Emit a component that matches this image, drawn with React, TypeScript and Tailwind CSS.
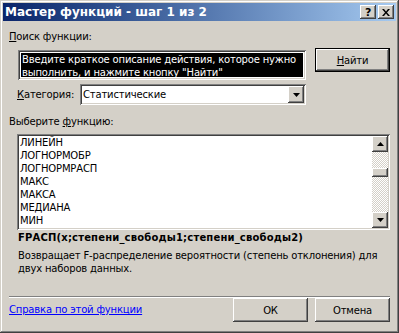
const raised =
  'shadow-[inset_-1px_-1px_#404040,inset_1px_1px_#fff,inset_-2px_-2px_#808080,inset_2px_2px_#d4d0c8]';
const sunken =
  'shadow-[inset_1px_1px_#808080,inset_-1px_-1px_#fff,inset_2px_2px_#404040,inset_-2px_-2px_#d4d0c8]';

const functions = ['ЛИНЕЙН', 'ЛОГНОРМОБР', 'ЛОГНОРМРАСП', 'МАКС', 'МАКСА', 'МЕДИАНА', 'МИН'];

function Arrow({ up = false }: { up?: boolean }) {
  return (
    <svg width="7" height="4" viewBox="0 0 7 4" className={up ? 'rotate-180' : ''}>
      <path d="M0 0h7L3.5 4z" fill="#000" />
    </svg>
  );
}

function TitleBar() {
  return (
    <div className="h-[18px] flex items-center pl-[2px] pr-[2px] bg-linear-to-r from-[#0a246a] to-[#a6caf0]">
      <span className="text-white font-bold text-[12px] leading-[18px] tracking-normal">
        Мастер функций - шаг 1 из 2
      </span>
      <div className="ml-auto flex gap-[2px]">
        <div className={`w-[16px] h-[14px] bg-[#d4d0c8] flex items-center justify-center ${raised}`}>
          <span className="font-bold text-[11px] leading-none">?</span>
        </div>
        <div className={`w-[16px] h-[14px] bg-[#d4d0c8] flex items-center justify-center ${raised}`}>
          <svg width="8" height="7" viewBox="0 0 8 7">
            <path d="M0 0h2l2 2.5L6 0h2L5 3.5 8 7H6L4 4.5 2 7H0l3-3.5z" fill="#000" />
          </svg>
        </div>
      </div>
    </div>
  );
}

function Button({ label, def = false, u }: { label: string; def?: boolean; u?: number }) {
  const text =
    u === undefined ? (
      label
    ) : (
      <>
        {label.slice(0, u)}
        <span className="underline">{label[u]}</span>
        {label.slice(u + 1)}
      </>
    );
  return (
    <div
      className={`w-[75px] h-[24px] bg-[#d4d0c8] flex items-center justify-center ${
        def ? 'border border-black' : ''
      } ${raised}`}
    >
      <span className="leading-[13px]">{text}</span>
    </div>
  );
}

export default function App() {
  return (
    <div className="w-[399px] h-[333px] bg-[#d4d0c8] p-[3px] flex flex-col font-['DejaVu_Sans',sans-serif] text-[10px] tracking-[-0.17px] text-black shadow-[inset_-1px_-1px_#404040,inset_1px_1px_#d4d0c8,inset_-2px_-2px_#808080,inset_2px_2px_#fff]">
      <TitleBar />
      <div className="flex flex-col px-[6px]">
        <div className="mt-[9px] h-[13px] leading-[13px]">
          <span className="underline">П</span>оиск функции:
        </div>

        <div className="mt-[5px] flex items-start">
          <div className={`ml-[9px] mt-[2px] w-[288px] h-[30px] p-[2px] bg-white ${sunken}`}>
            <div className="h-full p-px bg-white">
              <div className="h-full bg-black text-white leading-[13px] pl-px overflow-hidden whitespace-nowrap">
                Введите краткое описание действия, которое нужно
                <br />
                выполнить, и нажмите кнопку "Найти"
              </div>
            </div>
          </div>
          <div className="ml-[9px]">
            <Button label="Найти" def u={0} />
          </div>
        </div>

        <div className="mt-[4px] flex items-center">
          <div className="ml-[8px] w-[63px] whitespace-nowrap">
            <span className="underline">К</span>атегория:
          </div>
          <div className={`w-[226px] h-[21px] p-[2px] bg-white flex ${sunken}`}>
            <div className="flex-1 pl-px leading-[17px]">Статистические</div>
            <div className={`w-[16px] h-[17px] bg-[#d4d0c8] flex items-center justify-center ${raised}`}>
              <Arrow />
            </div>
          </div>
        </div>

        <div className="mt-[10px] h-[13px] leading-[13px]">
          Выберите <span className="underline">ф</span>ункцию:
        </div>

        <div className={`mt-[6px] ml-[8px] w-[373px] h-[96px] p-[2px] bg-white flex ${sunken}`}>
          <div className="flex-1 pl-px overflow-hidden">
            {functions.map((f) => (
              <div key={f} className="h-[13px] leading-[13px]">
                {f}
              </div>
            ))}
          </div>
          <div className="w-[16px] flex flex-col bg-[image:repeating-conic-gradient(#d4d0c8_0_25%,#fff_0_50%)] bg-[length:2px_2px]">
            <div className={`h-[16px] bg-[#d4d0c8] flex items-center justify-center ${raised}`}>
              <Arrow up />
            </div>
            <div className="flex-1 pt-[16px]">
              <div className={`h-[9px] bg-[#d4d0c8] ${raised}`} />
            </div>
            <div className={`h-[16px] bg-[#d4d0c8] flex items-center justify-center ${raised}`}>
              <Arrow />
            </div>
          </div>
        </div>

        <div className="mt-[1px] ml-[9px] h-[13px] leading-[13px] font-bold tracking-[0.18px]">
          FРАСП(x;степени_свободы1;степени_свободы2)
        </div>
        <div className="mt-[5px] ml-[9px] leading-[13px] whitespace-nowrap">
          Возвращает F-распределение вероятности (степень отклонения) для
          <br />
          двух наборов данных.
        </div>

        <div className="mt-[21px] w-[381px] border-t border-t-[#808080] border-b border-b-white" />

        <div className="flex items-start">
          <div className="mt-[5px] leading-[13px] text-[#0000ff] underline">Справка по этой функции</div>
          <div className="ml-auto">
            <Button label="ОК" />
          </div>
          <div className="ml-[7px]">
            <Button label="Отмена" />
          </div>
        </div>
      </div>
    </div>
  );
}
